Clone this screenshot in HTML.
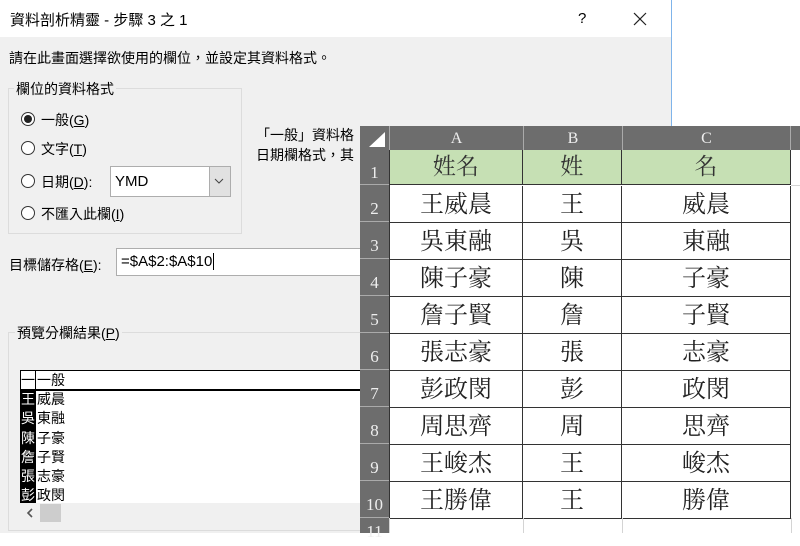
<!DOCTYPE html>
<html><head><meta charset="utf-8"><style>
*{margin:0;padding:0;box-sizing:border-box}
body{width:800px;height:533px;overflow:hidden;background:#fff;position:relative;font-family:"Liberation Sans","Noto Sans CJK TC",sans-serif;font-size:14px;color:#000}
.abs{position:absolute}
#dlg{left:0;top:0;width:672px;height:533px;background:#f0f0f0;border-top:1px solid #7fb4ea;border-right:1px solid #7fb4ea}
#title{left:0;top:0;width:671px;height:37px;background:#fff}
.radio{width:14px;height:14px;border:1px solid #333;border-radius:50%;background:#fff}
.u{text-decoration:underline}
#ss{left:360px;top:126px;width:440px;height:407px;background:#fff;font-family:"Liberation Serif","Noto Serif CJK TC",serif}
.hd{background:#6d6d6d;color:#fff;position:absolute;text-align:center}
.pv{position:absolute;font-size:13px;line-height:19px;height:19px}
</style></head><body>
<div id="dlg" class="abs"></div>
<div id="title" class="abs"></div>
<div class="abs" style="left:10px;top:9px;font-size:15px">資料剖析精靈 - 步驟 3 之 1</div>
<div class="abs" style="left:578px;top:10px;font-size:15px">?</div>
<svg class="abs" style="left:633px;top:12px" width="14" height="14"><path d="M1 1L13 13M13 1L1 13" stroke="#222" stroke-width="1.2"/></svg>
<div class="abs" style="left:9px;top:48px">請在此畫面選擇欲使用的欄位，並設定其資料格式。</div>
<div class="abs" style="left:8px;top:88px;width:234px;height:146px;border:1px solid #dcdcdc"></div>
<div class="abs" style="left:14px;top:79px;background:#f0f0f0;padding:0 2px">欄位的資料格式</div>
<div class="abs radio" style="left:21px;top:112px"><div style="width:8px;height:8px;border-radius:50%;background:#222;margin:2px"></div></div>
<div class="abs" style="left:41px;top:110px">一般(<span class="u">G</span>)</div>
<div class="abs radio" style="left:21px;top:141px"></div>
<div class="abs" style="left:41px;top:139px">文字(<span class="u">T</span>)</div>
<div class="abs radio" style="left:21px;top:174px"></div>
<div class="abs" style="left:41px;top:172px">日期(<span class="u">D</span>):</div>
<div class="abs" style="left:110px;top:166px;width:121px;height:31px;border:1px solid #adadad;background:#fff"></div>
<div class="abs" style="left:209px;top:167px;width:21px;height:29px;background:#e1e1e1;border-left:1px solid #adadad"></div>
<svg class="abs" style="left:214px;top:178px" width="10" height="6"><path d="M1 1L5 5L9 1" stroke="#444" fill="none"/></svg>
<div class="abs" style="left:115px;top:173px;font-size:15px">YMD</div>
<div class="abs radio" style="left:21px;top:206px"></div>
<div class="abs" style="left:41px;top:204px">不匯入此欄(<span class="u">I</span>)</div>
<div class="abs" style="left:256px;top:125px">「一般」資料格</div>
<div class="abs" style="left:256px;top:145px">日期欄格式，其</div>
<div class="abs" style="left:9px;top:255px">目標儲存格(<span class="u">E</span>):</div>
<div class="abs" style="left:116px;top:248px;width:250px;height:28px;border:1px solid #adadad;background:#fff"></div>
<div class="abs" style="left:121px;top:253px;font-size:15px">=$A$2:$A$10<span style="border-left:1px solid #000;margin-left:1px"></span></div>
<div class="abs" style="left:8px;top:332px;width:360px;height:199px;border:1px solid #dcdcdc"></div>
<div class="abs" style="left:15px;top:323px;background:#f0f0f0;padding:0 2px">預覽分欄結果(<span class="u">P</span>)</div>
<div class="abs" style="left:20px;top:370px;width:345px;height:133px;background:#fff;border-left:1px solid #000;border-top:1px solid #000"></div>
<div class="abs" style="left:20px;top:389px;width:345px;height:2px;background:#000"></div>
<div class="abs" style="left:20px;top:391px;width:16px;height:112px;background:#000"></div>
<div class="abs" style="left:35px;top:370px;width:1px;height:20px;background:#000"></div>
<div class="pv" style="left:21px;top:371px;font-size:14px">一</div><div class="pv" style="left:37px;top:371px;font-size:14px">一般</div>
<div class="pv" style="left:21px;top:390px;color:#fff;line-height:19.3px;font-size:14px">王<br>吳<br>陳<br>詹<br>張<br>彭</div>
<div class="pv" style="left:37px;top:390px;line-height:19.3px;font-size:14px">威晨<br>東融<br>子豪<br>子賢<br>志豪<br>政閔</div>
<div class="abs" style="left:20px;top:503px;width:345px;height:20px;background:#f0f0f0"></div>
<div class="abs" style="left:40px;top:504px;width:21px;height:18px;background:#cdcdcd"></div>
<svg class="abs" style="left:26px;top:508px" width="8" height="10"><path d="M6 1L2 5L6 9" stroke="#555" stroke-width="1.6" fill="none"/></svg>

<div id="ss" class="abs">
<div class="hd" style="left:0;top:0;width:440px;height:24px"></div>
<div class="hd" style="left:0;top:0;width:29px;height:407px"></div>
<svg class="abs" style="left:8px;top:6px" width="18" height="16"><path d="M17 0V15H1Z" fill="#fff"/></svg>
<div class="hd" style="left:29px;top:0;width:134px;height:24px;line-height:26px;font-size:16px;color:#eee;border-left:1px solid #aaa">A</div>
<div class="hd" style="left:163px;top:0;width:99px;height:24px;line-height:26px;font-size:16px;color:#eee;border-left:1px solid #aaa">B</div>
<div class="hd" style="left:262px;top:0;width:169px;height:24px;line-height:26px;font-size:16px;color:#eee;border-left:1px solid #aaa;border-right:1px solid #aaa">C</div>
<div class="abs" style="left:29px;top:24px;width:402px;height:35px;background:#c6e0b4"></div>
<div class="abs" style="left:29px;top:24px;width:1px;height:369px;background:#333"></div>
<div class="abs" style="left:0;top:24px;width:29px;font-size:17px;color:#eee;text-align:center">
<div style="height:35px;line-height:46px;border-bottom:1px solid #aaa">1</div>
<div style="height:37px;line-height:48px;border-bottom:1px solid #aaa">2</div>
<div style="height:37px;line-height:48px;border-bottom:1px solid #aaa">3</div>
<div style="height:37px;line-height:48px;border-bottom:1px solid #aaa">4</div>
<div style="height:37px;line-height:48px;border-bottom:1px solid #aaa">5</div>
<div style="height:37px;line-height:48px;border-bottom:1px solid #aaa">6</div>
<div style="height:37px;line-height:48px;border-bottom:1px solid #aaa">7</div>
<div style="height:37px;line-height:48px;border-bottom:1px solid #aaa">8</div>
<div style="height:37px;line-height:48px;border-bottom:1px solid #aaa">9</div>
<div style="height:37px;line-height:48px;border-bottom:1px solid #aaa">10</div>
<div style="height:20px;line-height:28px">11</div>
</div>
<div class="abs" style="left:30px;top:24px;width:401px">
<div style="display:flex;height:35px;border-bottom:1px solid #333"><div style="width:133px;border-right:1px solid #333;text-align:center;font-size:23px;line-height:34px;color:#333">姓名</div><div style="width:99px;border-right:1px solid #333;text-align:center;font-size:23px;line-height:34px;color:#333">姓</div><div style="width:169px;border-right:1px solid #333;text-align:center;font-size:23px;line-height:34px;color:#333">名</div></div>
</div>
<div class="abs" style="left:30px;top:60px;width:401px;font-size:24px;color:#222">
<style>.r{display:flex;height:37px;border-bottom:1px solid #333}.r div{text-align:center;line-height:38px;border-right:1px solid #333}.r div:nth-child(1){width:133px}.r div:nth-child(2){width:99px}.r div:nth-child(3){width:169px}</style>
<div class="r"><div>王威晨</div><div>王</div><div>威晨</div></div>
<div class="r"><div>吳東融</div><div>吳</div><div>東融</div></div>
<div class="r"><div>陳子豪</div><div>陳</div><div>子豪</div></div>
<div class="r"><div>詹子賢</div><div>詹</div><div>子賢</div></div>
<div class="r"><div>張志豪</div><div>張</div><div>志豪</div></div>
<div class="r"><div>彭政閔</div><div>彭</div><div>政閔</div></div>
<div class="r"><div>周思齊</div><div>周</div><div>思齊</div></div>
<div class="r"><div>王峻杰</div><div>王</div><div>峻杰</div></div>
<div class="r"><div>王勝偉</div><div>王</div><div>勝偉</div></div>
</div>
<div class="abs" style="left:431px;top:59px;width:9px;height:1px;background:#d4d4d4"></div>
<div class="abs" style="left:29px;top:392px;width:1px;height:15px;background:#d4d4d4"></div>
<div class="abs" style="left:163px;top:392px;width:1px;height:15px;background:#d4d4d4"></div>
<div class="abs" style="left:262px;top:392px;width:1px;height:15px;background:#d4d4d4"></div>
<div class="abs" style="left:431px;top:392px;width:1px;height:15px;background:#d4d4d4"></div>
</div>
</body></html>
